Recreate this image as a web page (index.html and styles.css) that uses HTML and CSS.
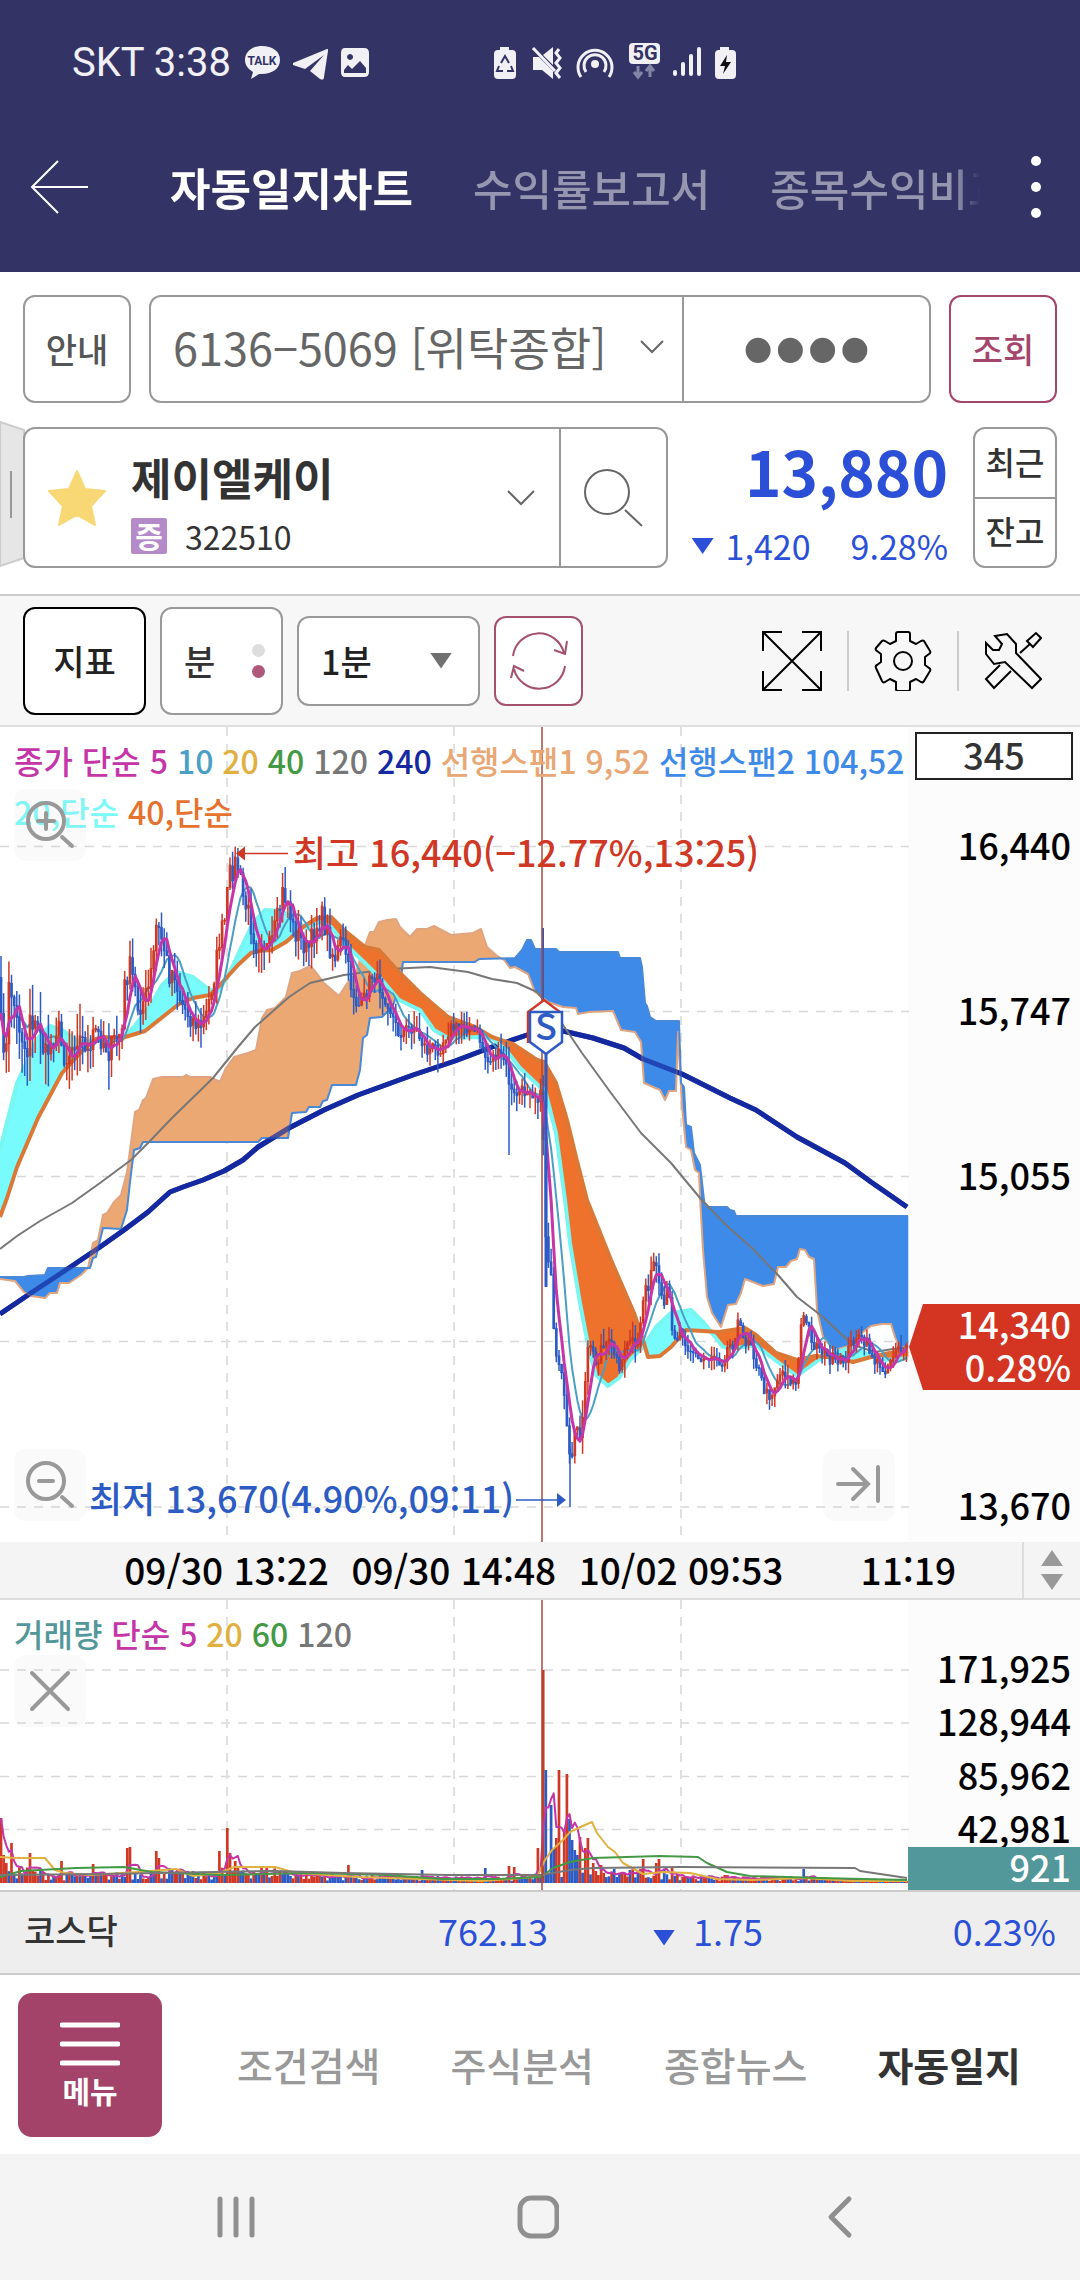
FILE: index.html
```html
<!doctype html>
<html lang="ko">
<head>
	<meta charset="UTF-8">
	<meta name="viewport" content="width=device-width">
	<title>자동일지차트</title>
	<link rel="stylesheet" href="styles.css">
</head>
<body>
	<header class="top">
		<div class="status">
			<span class="carrier">SKT 3:38</span>
			<svg class="st-left" width="128" height="40" viewBox="0 0 128 40">
				<g fill="#f0f0f5">
					<path d="M18 3C8 3 1 9 1 17c0 5 3 9 8 12l-2 7 8-5c12 1 21-5 21-14S28 3 18 3z"/>
					<path d="M49 20 83 6c1 0 1 0 1 2l-4 26c0 3-2 3-4 2l-10-8 14-16-19 14-12-4z"/>
					<path fill-rule="evenodd" d="M101 5h19q5 0 5 5v19q0 5-5 5h-19q-4 0-4-5V10q0-5 4-5zm5 6a3 3 0 1 0 .1 0zM100 30h22v-5l-6-7-8 8-4-4-4 5z"/>
				</g>
				<text x="18" y="22" class="talk">TALK</text>
			</svg>
			<svg class="st-right" width="248" height="44" viewBox="0 -2 248 44">
				<g fill="#f0f0f5">
					<path d="M7 4h9v3h3q4 0 4 4v21q0 4-4 4H5q-4 0-4-4V11q0-4 4-4h2z"/>
					<path d="M40 14h6l14 14v8l-11-9h-9zM50 12l10-8v18z"/>
					<circle cx="102" cy="21" r="4"/>
					<rect x="136" y="0" width="31" height="21" rx="4"/>
					<rect x="180" y="27" width="4" height="6" rx="2"/><rect x="188" y="19" width="4" height="14" rx="2"/><rect x="196" y="11" width="4" height="22" rx="2"/><rect x="204" y="4" width="4" height="29" rx="2"/>
					<path d="M227 4h9v3h3q4 0 4 4v21q0 4-4 4h-13q-4 0-4-4V11q0-4 4-4h1z"/>
				</g>
				<g fill="none" stroke="#f0f0f5" stroke-width="3">
					<path d="m40 5 22 23M66 6l-3 4 4 5-4 5 4 5-4 5 4 5"/>
					<path d="M88 34a17 17 0 1 1 28 0M93 29a11 11 0 1 1 18 0"/>
				</g>
				<path d="m8 20 4-7 4 7M18 23l2 5h-6M10 28H4l2-5" fill="none" stroke="#333366" stroke-width="2"/>
				<path d="M145 23v10m-4-4 4 5 4-5M157 34V24m-4 4 4-5 4 5" fill="none" stroke="#8585a8" stroke-width="3"/>
				<path d="m234 12-7 11h5l-2 8 8-12h-5z" fill="#111"/>
				<text x="152" y="17" class="fiveg">5G</text>
			</svg>
		</div>
		<div class="appbar">
			<button class="back" aria-label="뒤로"><svg width="60" height="56" viewBox="0 0 60 56"><path d="M28 2 2 28l26 26M2 28h56" fill="none" stroke="#fff" stroke-width="2"/></svg></button>
			<nav class="tabs">
				<a href="#" class="on">자동일지차트</a>
				<a href="#">수익률보고서</a>
				<a href="#">종목수익비교</a>
			</nav>
			<button class="more" aria-label="더보기"><svg width="12" height="64" viewBox="0 0 12 64" fill="#fff"><circle cx="6" cy="6" r="5"/><circle cx="6" cy="32" r="5"/><circle cx="6" cy="58" r="5"/></svg></button>
		</div>
	</header>

	<section class="account">
		<button class="btn">안내</button>
		<div class="acc-box">
			<div class="acc-sel">
				<select aria-label="계좌번호"><option>6136−5069 [위탁종합]</option></select>
				<svg class="arrow" width="24" height="14" viewBox="0 0 24 14"><path d="m1 1 11 11L23 1" fill="none" stroke="#666" stroke-width="2"/></svg>
			</div>
			<input type="password" value="1234" aria-label="비밀번호">
		</div>
		<button class="btn red">조회</button>
	</section>

	<section class="stock">
		<svg class="handle" width="25" height="146" viewBox="0 0 25 146"><path d="M0 1 24 9v128L0 145z" fill="#e6e6e6" stroke="#ccc" stroke-width="2"/><path d="M11 50v47" stroke="#999" stroke-width="2"/></svg>
		<div class="stock-box">
			<button class="star" aria-label="관심종목"><svg width="60" height="58" viewBox="0 0 60 58"><path d="m30 2 8 18 20 2-14 15 4 19-18-10-18 10 4-19L2 22l20-2z" fill="#f8d775" stroke="#f8d775" stroke-width="2" stroke-linejoin="round"/></svg></button>
			<button class="name">
				<span class="name-txt">
					<strong>제이엘케이</strong>
					<span class="code"><i>증</i>322510</span>
				</span>
				<svg width="28" height="16" viewBox="0 0 28 16"><path d="m1 1 13 13L27 1" fill="none" stroke="#666" stroke-width="2"/></svg>
			</button>
			<button class="search" aria-label="검색"><svg width="60" height="60" viewBox="0 0 60 60" fill="none" stroke="#666" stroke-width="2"><circle cx="24" cy="24" r="22"/><path d="m42 42 17 16"/></svg></button>
		</div>
		<div class="price">
			<strong>13,880</strong>
			<p><b class="down"></b><span>1,420</span><span class="rate">9.28%</span></p>
		</div>
		<div class="pair">
			<button>최근</button>
			<button>잔고</button>
		</div>
	</section>

	<section class="tools">
		<button class="btn dark">지표</button>
		<button class="btn cycle">분<span class="dots"><i></i><i class="on"></i></span></button>
		<div class="min-sel">
			<select aria-label="분 주기"><option>1분</option></select>
			<b class="down gray"></b>
		</div>
		<button class="refresh" aria-label="새로고침">
			<svg width="58" height="58" viewBox="0 0 58 58" fill="none" stroke="#a4506f" stroke-width="2"><path d="M3 24a26 26 0 0 1 51-3M44 18l11 4 2-13M55 34a26 26 0 0 1-51 3M1 46l3-12 10 5"/></svg>
		</button>
		<div class="icons">
			<button aria-label="전체화면"><svg width="62" height="62" viewBox="0 0 62 62" fill="none" stroke="#000" stroke-width="2"><path d="M21 2H2v19M41 2h19v19M21 60H2V41M41 60h19V41M2 2l58 58M60 2 2 60"/></svg></button>
			<button aria-label="설정"><svg width="58" height="60" viewBox="0 0 58 60" fill="none" stroke="#000" stroke-width="2" stroke-linejoin="round"><path d="M22 3q0-2 2-2h10q2 0 2 2v7l6 3 5-3q2-1 3 0l6 10q1 2-1 3l-4 3v8l4 3q2 1 1 3l-6 10q-1 2-3 1l-5-3-6 3v7q0 2-2 2H24q-2 0-2-2v-7l-6-3-5 3q-2 1-3-1L2 37q-1-2 1-3l4-3v-8l-4-3q-2-1-1-3L8 10q1-1 3 0l5 3 6-3z"/><circle cx="29" cy="30" r="9"/></svg></button>
			<button aria-label="도구"><svg width="58" height="60" viewBox="0 0 58 60" fill="none" stroke="#000" stroke-width="2"><path d="m11 5 12-2 9 10v9l25 26-9 9-27-26-11 2L2 23V12l7 7h6l3-6zM36 22l10-9M43 10l9-8 5 5-8 9zM16 34 2 48l8 9 17-17"/></svg></button>
		</div>
	</section>

	<section class="chart">
		<svg id="price" viewBox="0 0 1080 815"></svg>
		<p class="legend">
			<span class="c5">종가 단순 5</span> <span class="c10">10</span> <span class="c20">20</span> <span class="c40">40</span> <span class="c120">120</span> <span class="c240">240</span> <span class="cs1">선행스팬1 9,52</span> <span class="cs2">선행스팬2 104,52</span><br>
			<span class="cc">20,단순</span> <span class="co">40,단순</span>
		</p>
		<input class="count" type="text" value="345" aria-label="봉 개수">
		<button class="float zin" aria-label="확대"><svg width="72" height="72" viewBox="0 0 72 72"><path d="M32 24v16M24 32h16M48 48l10 9M50 32a18 18 0 1 1-36 0 18 18 0 0 1 36 0z"/></svg></button>
		<button class="float zout" aria-label="축소"><svg width="72" height="72" viewBox="0 0 72 72"><path d="M25 32h14M48 48l10 9M50 32a18 18 0 1 1-36 0 18 18 0 0 1 36 0z"/></svg></button>
		<button class="float last" aria-label="마지막으로"><svg width="72" height="72" viewBox="0 0 72 72"><path d="M15 35h30M30 20l15 15-15 15M55 18v34"/></svg></button>
	</section>

	<div class="times">
		<span>09/30 13:22</span><span>09/30 14:48</span><span>10/02 09:53</span><span>11:19</span>
		<button class="updown" aria-label="차트 크기"><svg width="24" height="40" viewBox="0 0 24 40" fill="#999"><path d="m12 0 11 16H1zM1 24h22L12 40z"/></svg></button>
	</div>

	<section class="chart vol">
		<svg id="volume" viewBox="0 0 1080 290"></svg>
		<p class="legend"><span class="cv">거래량</span> <span class="c5">단순 5</span> <span class="c20">20</span> <span class="c40">60</span> <span class="c120">120</span></p>
		<button class="float close" aria-label="닫기"><svg width="72" height="72" viewBox="0 0 72 72"><path d="m18 18 36 36M54 18 18 54"/></svg></button>
	</section>

	<section class="index">
		<span class="label">코스닥</span>
		<span>762.13</span>
		<span class="diff"><b class="down"></b>1.75</span>
		<span>0.23%</span>
	</section>

	<nav class="menu">
		<button class="menu-btn"><svg width="60" height="46" viewBox="0 0 60 46"><path d="M2 4h56M2 23h56M2 42h56" stroke="#fff" stroke-width="5" stroke-linecap="round"/></svg>메뉴</button>
		<a href="#">조건검색</a>
		<a href="#">주식분석</a>
		<a href="#">종합뉴스</a>
		<a href="#" class="on">자동일지</a>
	</nav>

	<footer class="sysnav">
		<button aria-label="최근 앱"><svg width="42" height="44" viewBox="0 0 42 44"><path d="M5 4v36M21 4v36M37 4v36"/></svg></button>
		<button aria-label="홈"><svg width="42" height="44" viewBox="0 0 42 44"><rect x="3" y="3" width="37" height="38" rx="11"/></svg></button>
		<button aria-label="뒤로"><svg width="42" height="44" viewBox="0 0 42 44"><path d="M30 4 12 22l18 18"/></svg></button>
	</footer>
	<script src="chart.js"></script>
</body>
</html>
```

FILE: styles.css
```css
*{ box-sizing: border-box;}
body{ margin: 0; background: #fff; color: #333; font-family: "Noto Sans CJK KR","Noto Sans",sans-serif; font-size: 34px; line-height: 1;}
button,input,select{ font: inherit; color: inherit; margin: 0; padding: 0; border: 0; background: none; outline: none;}
select{ appearance: none; -webkit-appearance: none;}
a{ color: inherit; text-decoration: none;}
p{ margin: 0;}
i{ font-style: normal;}
svg{ display: block; flex: none;}

/* header */
.top{ background: #333366; color: #fff;}
.status{ height: 106px; padding: 20px 0 0 72px; display: flex; align-items: center;}
.carrier{ font: 40px/40px Roboto,sans-serif; color: #f0f0f5;}
.st-left{ margin-left: 13px;}
.st-right{ margin-left: 121px;}
.talk{ font: bold 12px Roboto,sans-serif; fill: #333366; text-anchor: middle;}
.fiveg{ font: bold 20px Roboto,sans-serif; fill: #333366; text-anchor: middle;}
.appbar{ height: 166px; display: flex; align-items: center; padding: 0 38px 4px 30px;}
.tabs{ flex: 1; min-width: 0; margin: 0 50px 0 80px; display: flex; gap: 60px; overflow: hidden; white-space: nowrap; font-size: 43px; line-height: 64px; color: #9696b0; font-weight: 500; -webkit-mask-image: linear-gradient(to right,#000 97%,transparent); mask-image: linear-gradient(to right,#000 97%,transparent);}
.tabs .on{ color: #fff; font-size: 44px; font-weight: 700;}

/* account */
.account{ display: flex; gap: 18px; padding: 23px 23px 0;}
.btn{ flex: none; width: 108px; height: 108px; border: 2px solid #999; border-radius: 12px; background: #fff; color: #555; font-weight: 500;}
.btn.red{ color: #a4456c; border-color: #a4456c;}
.acc-box{ flex: 1; min-width: 0; height: 108px; display: grid; grid-template-columns: 535fr 246fr; border: 2px solid #999; border-radius: 12px; color: #666;}
.acc-sel{ min-width: 0; display: flex; align-items: center; padding: 0 18px 4px 22px; border-right: 2px solid #999;}
.acc-sel select{ flex: 1; min-width: 0; font-size: 45px; line-height: 66px;}
.acc-box input{ width: 100%; height: 104px; min-width: 0; text-align: center; font: 92px/104px "Liberation Sans",sans-serif;}

/* stock */
.stock{ position: relative; display: flex; align-items: stretch; padding: 24px 23px 26px; height: 191px;}
.handle{ position: absolute; left: 0; top: 18px;}
.stock-box{ position: relative; flex: 644; display: flex; border: 2px solid #999; border-radius: 12px; background: #fff;}
.star{ padding: 0 0 0 22px;}
.name{ flex: 1; display: flex; align-items: center; justify-content: space-between; padding: 0 24px 0 24px; text-align: left;}
.name-txt{ display: grid; gap: 16px; padding-top: 10px;}
.name strong{ font-size: 44px; line-height: 50px;}
.code{ display: flex; align-items: center; gap: 18px; font-size: 32px; line-height: 36px; font-weight: 400;}
.code i{ width: 36px; height: 36px; background: #b48ac8; color: #fff; font-size: 30px; line-height: 34px; font-weight: 700; text-align: center; border-radius: 2px;}
.search{ width: 107px; padding-left: 22px; border-left: 2px solid #999;}
.price{ flex: 281; padding-right: 25px; color: #2b50d7; text-align: right;}
.price strong{ display: block; font-size: 62px; line-height: 86px;}
.price p{ display: flex; align-items: center; justify-content: flex-end; font-size: 34px; line-height: 66px;}
.price .rate{ margin-left: 40px;}
.down{ display: inline-block; width: 22px; height: 16px; margin-right: 12px; background: #2b50d7; clip-path: polygon(0 0,100% 0,50% 100%);}
.down.gray{ background: #707070; margin: 0;}
.pair{ width: 84px; display: grid; border: 2px solid #999; border-radius: 12px;}
.pair button{ font-size: 32px; font-weight: 500; padding-bottom: 4px;}
.pair button + button{ border-top: 2px solid #999;}

/* toolbar */
.tools{ display: flex; align-items: center; gap: 14px; height: 133px; padding: 0 23px; background: #f7f7f7; border-top: 2px solid #ccc; border-bottom: 2px solid #e0e0e0;}
.tools .btn{ width: 123px; color: #333;}
.tools .dark{ border-color: #000; color: #222;}
.cycle{ display: flex; align-items: center; justify-content: space-between; padding: 0 16px 0 22px;}
.dots{ display: grid; gap: 8px;}
.dots i{ width: 13px; height: 13px; border-radius: 50%; background: #ddd;}
.dots .on{ background: #b0587c;}
.min-sel{ display: flex; align-items: center; width: 183px; height: 90px; padding: 0 26px 0 22px; border: 2px solid #999; border-radius: 12px; background: #fff; font-weight: 500;}
.min-sel select{ flex: 1; min-width: 0; height: 60px; color: #222;}
.refresh{ width: 89px; height: 90px; display: grid; place-content: center; border: 2px solid #a4506f; border-radius: 12px; background: #fff;}
.icons{ margin-left: auto; margin-right: -10px; display: flex;}
.icons button{ width: 110px; height: 60px; display: grid; place-content: center;}
.icons button + button{ border-left: 2px solid #ccc;}

/* charts */
.chart{ position: relative;}
.chart > svg{ width: 100%; height: auto;}
.chart text{ font-family: "Noto Sans CJK KR",sans-serif; font-weight: 500; font-size: 36px;}
.legend{ position: absolute; left: 14px; top: 8px; font-size: 32px; line-height: 51px; font-weight: 500; white-space: nowrap;}
.c5{ color: #c436a8;}
.c10{ color: #4a9fc4;}
.c20{ color: #e0b040;}
.c40{ color: #449945;}
.c120{ color: #777;}
.c240{ color: #14289f;}
.cs1{ color: #e9a775;}
.cs2{ color: #3e8ae8;}
.cc{ color: #7cfafa;}
.co{ color: #e5732f;}
.cv{ color: #529799;}
.count{ position: absolute; right: 7px; top: 5px; width: 158px; height: 48px; padding-bottom: 4px; border: 2px solid #222; background: #fff; text-align: center; font-size: 36px; font-weight: 500;}
.float{ position: absolute; left: 14px; width: 72px; height: 72px; border-radius: 12px; background: rgba(190,190,190,.08);}
.float path{ fill: none; stroke: #999; stroke-width: 4; stroke-linecap: round;}
.zin{ top: 62px;}
.zout{ bottom: 21px;}
.last{ left: auto; right: 185px; bottom: 21px;}
.close{ top: 55px;}

.times{ display: grid; grid-template-columns: repeat(4,227fr) 58fr; padding-left: 113px; height: 58px; background: #f4f4f4; border-bottom: 2px solid #ddd; color: #000; font-size: 37px; font-weight: 500; line-height: 54px; text-align: center; white-space: nowrap;}
.updown{ display: grid; place-content: center; border-left: 2px solid #ddd;}

/* index row */
.index{ display: grid; grid-template-columns: 250fr 274fr 215fr 293fr; align-items: center; height: 85px; padding: 0 24px 6px; background: #eee; border-top: 2px solid #ccc; border-bottom: 2px solid #ccc; color: #2b50d7; font-size: 36px; text-align: right;}
.index .label{ color: #333; font-size: 34px; font-weight: 500; text-align: left;}
.index .down{ margin-right: 18px;}

/* bottom menu */
.menu{ display: grid; grid-template-columns: 184px repeat(4,1fr); align-items: center; height: 179px; padding: 0 24px 0 18px; font-size: 39px; color: #999; text-align: center; font-weight: 500;}
.menu-btn{ display: grid; place-content: center; justify-items: center; gap: 8px; height: 144px; margin-right: 40px; padding-bottom: 4px; border-radius: 14px; background: #a34369; color: #fff; font-size: 30px; font-weight: 700;}
.menu .on{ color: #333; font-weight: 700;}

.sysnav{ display: flex; justify-content: center; gap: 260px; height: 126px; padding-right: 4px; background: #f4f4f4;}
.sysnav svg path,.sysnav svg rect{ fill: none; stroke: #8f8f8f; stroke-width: 5; stroke-linecap: round; stroke-linejoin: round;}
```

FILE: chart.js
```js
var W = 908, N = 345, STEP = W / N;
var RED = '#cf3825', BLUE = '#2d5bc4';

// 기준점 사이를 직선으로 보간
function at(pts, x) {
	for (var i = 0; i < pts.length - 2; i += 2) {
		if (x <= pts[i + 2]) {
			var t = (x - pts[i]) / (pts[i + 2] - pts[i]);
			return pts[i + 1] + (pts[i + 3] - pts[i + 1]) * Math.max(0, t);
		}
	}
	return pts[pts.length - 1];
}
var seed = 7;
function rnd() {
	seed = (seed * 16807) % 2147483647;
	return seed / 2147483647;
}
function line(pts, color, w) {
	return '<polyline points="' + pts.join(' ') + '" fill="none" stroke="' + color + '" stroke-width="' + w + '" stroke-linejoin="round"/>';
}
function seg(x1, y1, x2, y2, color, w, dash) {
	return '<path d="M' + x1 + ' ' + y1 + 'L' + x2 + ' ' + y2 + '" stroke="' + color + '" stroke-width="' + w + '"' + (dash ? ' stroke-dasharray="9 8"' : '') + '/>';
}
function text(x, y, s, color, anchor) {
	return '<text x="' + x + '" y="' + y + '" fill="' + color + '" text-anchor="' + anchor + '">' + s + '</text>';
}
// 두 선 사이 채우기: a가 위면 ca, b가 위면 cb
function cloud(a, b, ca, cb) {
	var pa = '', pb = '';
	for (var x = 0; x < W; x++) {
		var a1 = at(a, x), a2 = at(a, x + 1), b1 = at(b, x), b2 = at(b, x + 1);
		var q = 'M' + x + ' ' + a1.toFixed(1) + 'L' + (x + 1.3) + ' ' + a2.toFixed(1) + 'V' + b2.toFixed(1) + 'L' + x + ' ' + b1.toFixed(1) + 'z';
		if (a1 + a2 < b1 + b2) pa += q; else pb += q;
	}
	return '<path d="' + pa + '" fill="' + ca + '"/><path d="' + pb + '" fill="' + cb + '"/>';
}
function avg(arr, n) {
	var out = [];
	for (var i = 0; i < arr.length; i++) {
		var s = 0, c = 0;
		for (var j = Math.max(0, i - n + 1); j <= i; j++) { s += arr[j]; c++; }
		out.push((i * STEP + 1).toFixed(1), (s / c).toFixed(1));
	}
	return out;
}

var ma240 = [0,587,31,566,69,541,100,520,124,503,148,485,170,465,183,460,203,453,224,444,243,433,258,420,289,401,324,383,358,368,413,348,455,334,492,320,527,308,545,301,563,304,593,311,624,321,643,332,682,347,730,371,756,383,797,410,845,436,871,455,907,480];
var ma120 = [0,522,17,509,40,494,72,476,100,456,131,433,148,416,172,391,213,351,238,320,255,300,289,270,310,256,344,248,389,242,430,240,468,245,492,252,517,256,537,265,561,295,582,326,611,366,641,406,671,436,700,471,726,498,752,521,778,548,797,570,823,590,853,618,875,625,893,622,908,620];
var ma40 = [0,490,7,471,17,440,38,391,62,346,83,323,96,312,103,310,122,311,145,304,179,277,193,271,210,268,220,258,238,238,251,226,258,224,272,223,286,215,303,200,317,191,331,190,344,203,365,220,379,223,399,245,420,266,448,290,475,300,492,310,513,317,537,333,544,335,556,356,567,393,576,430,587,473,611,533,634,586,643,613,648,630,660,629,671,620,686,603,719,605,745,601,756,608,776,626,797,633,815,629,838,631,853,635,871,630,890,626,908,624];
var ma20 = [0,423,17,356,38,311,50,299,62,303,79,315,96,313,121,313,134,300,152,276,162,258,176,245,193,250,207,261,217,265,227,251,241,221,253,196,265,183,282,184,296,193,306,201,320,195,331,200,344,216,365,236,382,253,399,273,420,283,434,303,448,311,479,310,492,311,506,323,520,341,540,360,545,363,556,406,565,473,570,516,580,576,589,623,596,648,608,659,619,651,630,633,643,620,656,600,671,586,691,583,704,596,723,620,737,621,756,618,775,633,797,649,823,630,849,621,871,628,886,633,908,631];
var span1 = [0,552,15,554,24,565,31,569,45,571,50,566,57,566,60,556,69,556,81,548,88,541,93,516,98,513,103,488,107,486,114,475,121,468,127,445,131,416,135,385,139,383,143,373,146,371,153,352,162,350,183,350,186,348,190,350,210,350,220,355,226,341,234,330,248,326,256,323,262,291,267,283,275,281,286,270,292,246,300,244,310,239,315,244,324,256,339,269,346,258,356,246,362,226,370,205,374,205,379,195,387,193,396,192,400,200,410,210,417,202,427,202,434,199,451,208,473,206,481,202,487,220,496,228,504,233,510,241,515,240,528,247,535,265,548,275,563,280,576,281,578,287,589,285,613,284,621,303,635,305,641,315,644,356,660,363,665,373,669,364,676,364,678,305,682,380,686,420,691,423,695,443,699,446,700,470,703,523,707,570,712,586,721,600,728,578,736,577,741,566,745,552,763,559,774,557,778,540,786,540,791,534,797,532,800,522,805,523,809,530,814,532,817,583,823,610,834,623,853,618,862,606,871,599,882,597,891,597,895,610,899,620,908,620];
var span2 = [0,550,24,550,28,549,45,548,48,541,90,541,93,531,96,530,103,501,121,502,127,483,130,455,134,423,140,421,143,415,258,415,262,411,288,411,292,386,306,385,309,380,320,380,323,374,327,373,332,358,356,358,360,343,363,311,367,308,370,291,382,290,389,283,394,276,401,250,403,235,475,235,479,232,515,231,522,223,527,213,531,213,535,222,556,222,559,225,618,225,620,231,640,231,642,240,645,276,647,279,650,290,656,294,679,294,681,356,684,360,686,398,691,400,694,426,700,438,704,473,705,480,727,480,730,483,734,484,736,489,908,489];
var mid = [0,290,4,318,8,325,9,255,13,270,17,295,20,300,27,330,30,285,34,300,41,300,44,330,50,320,58,298,62,320,66,335,70,325,76,310,85,315,90,335,94,300,98,308,104,315,109,325,115,312,122,305,125,255,130,240,134,255,138,280,143,275,148,265,153,235,156,200,160,205,164,220,170,250,174,240,178,265,184,280,188,285,194,295,200,300,206,290,211,265,215,245,220,210,225,195,229,150,236,135,240,150,244,175,248,185,253,205,257,220,262,210,268,225,272,215,278,190,283,165,288,175,293,200,298,210,303,215,307,225,311,215,316,200,322,190,327,205,331,225,336,230,341,215,345,220,350,255,356,275,360,280,366,268,371,248,376,250,382,265,388,275,393,290,398,305,403,305,410,300,416,302,422,315,428,325,434,320,440,322,446,308,452,300,458,302,463,295,470,303,477,305,482,318,487,335,492,330,500,328,505,333,508,350,513,370,518,365,524,365,530,362,535,368,541,370,543,400,545,500,548,530,551,540,553,600,557,640,561,645,565,680,568,720,571,730,576,700,580,715,583,685,586,650,589,605,592,620,597,640,601,620,606,622,612,610,618,640,624,630,631,610,637,630,641,590,645,560,650,555,655,530,660,570,664,580,668,560,673,605,677,610,681,600,688,620,694,625,700,635,708,630,715,628,722,635,728,620,733,615,738,595,744,615,750,610,756,635,762,655,766,668,773,665,778,650,783,645,790,650,795,660,798,640,801,600,805,590,810,605,815,620,820,618,826,630,832,632,838,638,846,630,850,620,855,608,862,615,868,618,874,632,880,642,887,640,893,628,898,615,903,630,908,622];

function drawPrice() {
	var s = '<rect x="908" width="172" height="815" fill="#fcfcfc"/>';
	[119.5, 284.5, 449.5, 614.5, 780].forEach(function(y) { s += seg(0, y, 909, y, '#d8d8d8', 1.5, true); });
	[227, 454, 681].forEach(function(x) { s += seg(x, 0, x, 815, '#e0e0e0', 2, true); });

	s += line(ma240, '#14289f', 5);
	s += cloud(span1, span2, '#eba873', '#3e8ae8');
	s += line(span1, '#e0a580', 2) + line(span2, '#4a88d8', 2);
	s += '<g opacity=".7">' + line(ma240, '#14289f', 5) + '</g>';
	s += line(ma120, '#777', 2);
	s += cloud(ma20, ma40, '#78fbfd', '#ef722c');
	s += line(ma20, '#78f6f2', 4) + line(ma40, '#db7836', 4);

	var close = [], i, x;
	for (i = 0; i < N; i++) {
		x = i * STEP + 1;
		close.push(at(mid, x) + (rnd() - 0.5) * (x < 350 ? 22 : 13));
	}
	var bars = '';
	for (i = 0; i < N; i++) {
		x = i * STEP + 1;
		var o = i ? close[i - 1] : 250, c = close[i];
		var amp = x < 110 ? 34 : (x < 350 ? 22 : (x < 660 ? 18 : 12));
		var hi = Math.min(o, c) - rnd() * amp, lo = Math.max(o, c) + rnd() * amp;
		var color = c < o ? RED : BLUE;
		hi = Math.max(hi, 121);
		if (Math.abs(x - 235) < 1.4) hi = 119.5;
		if (Math.abs(x - 509) < 1.4) lo = 428;
		bars += seg(x.toFixed(1), hi.toFixed(1), x.toFixed(1), lo.toFixed(1), color, 1.5);
		bars += seg(x.toFixed(1), o.toFixed(1), x.toFixed(1), (c + (c > o ? 1 : -1)).toFixed(1), color, 2.7);
	}
	s += line(avg(close, 10), '#4a9fc4', 2) + bars + line(avg(close, 5), '#c436a8', 3);
	s += seg(543, 201, 543, 285, BLUE, 2) + seg(570, 720, 570, 780, BLUE, 1.5);
	s += seg(542, 0, 542, 815, '#a8483d', 1.5);
	s += seg(546, 326, 546, 560, BLUE, 3);

	// 매매 표시
	s += '<path d="M528 316V285L544 273L560 285V316" fill="#fff" stroke="#cf3825" stroke-width="2.5"/>';
	s += '<path d="M530 285H562V315L546 327L530 315Z" fill="#fff" stroke="#2d5bc4" stroke-width="2.5"/>';
	s += text(546, 313, 'S', BLUE, 'middle');

	s += seg(245, 126.5, 288, 126.5, RED, 1.5) + '<path d="M236 126.5l9-7v14z" fill="#cf3825"/>';
	s += text(293, 140, '최고 16,440(−12.77%,13:25)', '#cf3825', 'start');
	s += seg(516, 773, 557, 773, BLUE, 1.5) + '<path d="M566 773l-9-7v14z" fill="#2d5bc4"/>';
	s += text(89, 786, '최저 13,670(4.90%,09:11)', BLUE, 'start');

	s += text(1071, 133, '16,440', '#000', 'end') + text(1071, 298, '15,747', '#000', 'end') + text(1071, 463, '15,055', '#000', 'end') + text(1071, 793, '13,670', '#000', 'end');
	s += '<path d="M909 620L923 577H1080V663H923Z" fill="#d43523"/>';
	s += text(1071, 612, '14,340', '#fff', 'end') + text(1071, 655, '0.28%', '#fff', 'end');
	document.getElementById('price').innerHTML = s;
}

function drawVolume() {
	var y20 = [0,257,15,258,45,258,55,270,65,273,90,275,138,272,176,269,193,276,220,273,234,267,275,267,296,273,358,277,482,281,537,277,545,260,552,250,563,240,570,232,585,225,592,222,597,233,608,247,615,252,623,263,643,274,663,272,690,273,717,279,753,280,803,278,853,281,907,281];
	var y60 = [0,277,21,271,76,268,124,267,152,272,220,275,310,273,386,275,441,279,496,279,541,277,553,268,570,262,593,258,660,256,698,257,707,263,727,272,750,276,820,278,907,280];
	var y120 = [0,275,103,274,275,271,344,273,448,275,541,275,570,270,593,268,680,267,855,268,860,271,907,278];
	var spikes = [0,65, 3,28, 10,40, 30,30, 61,22, 93,19, 126,35, 128,36, 156,32, 159,25, 219,32, 227,55, 230,30, 235,22, 348,18, 422,13, 485,15, 507,20, 509,17, 513,16, 538,35, 543,213, 546,113, 549,79, 551,78, 554,35, 556,45, 559,113, 562,32, 564,53, 567,109, 569,64, 572,43, 575,33, 577,28, 580,46, 583,25, 585,35, 588,45, 591,30, 593,20, 596,12, 601,18, 614,14, 641,20, 643,24, 656,20, 659,24, 672,15, 803,14];
	var level = [0,20,20,14,60,8,110,8,160,14,200,8,235,17,270,14,320,8,420,5,500,5,541,8,600,10,660,12,700,6,820,5,840,3,908,2];
	var h = [], s = '', i, x;

	for (i = 0; i < N; i++) h.push(1 + at(level, i * STEP) * (0.2 + rnd()));
	for (i = 0; i < spikes.length; i += 2) h[Math.round(spikes[i] / STEP)] = spikes[i + 1];

	s += '<rect x="908" width="172" height="290" fill="#fcfcfc"/>';
	[70, 123, 176.5, 229.5].forEach(function(y) { s += seg(0, y, 909, y, '#d8d8d8', 1.5, true); });
	[227, 454, 681].forEach(function(x) { s += seg(x, 0, x, 290, '#e0e0e0', 2, true); });
	for (i = 0; i < N; i++) {
		x = i * STEP + 1;
		var red = h[i] > 15 ? (x < 544 || h[i] > 100 && x > 550 || x > 578 || h[i] === 45 || h[i] === 53) : rnd() > 0.55;
		s += seg(x.toFixed(1), 283, x.toFixed(1), (283 - h[i]).toFixed(1), red ? RED : BLUE, 2.7);
	}
	var top = h.map(function(v) { return 283 - v; });
	s += line(avg(top, 5), '#c436a8', 2) + line(y20, '#e0b040', 2) + line(y60, '#449945', 2) + line(y120, '#777', 2);
	s += seg(542, 0, 542, 290, '#a8483d', 1.5);
	s += text(1071, 83, '171,925', '#000', 'end') + text(1071, 136, '128,944', '#000', 'end') + text(1071, 190, '85,962', '#000', 'end') + text(1071, 243, '42,981', '#000', 'end');
	s += '<rect x="908" y="247" width="172" height="43" fill="#529799"/>' + text(1071, 282, '921', '#fff', 'end');
	document.getElementById('volume').innerHTML = s;
}

drawPrice();
drawVolume();
```
